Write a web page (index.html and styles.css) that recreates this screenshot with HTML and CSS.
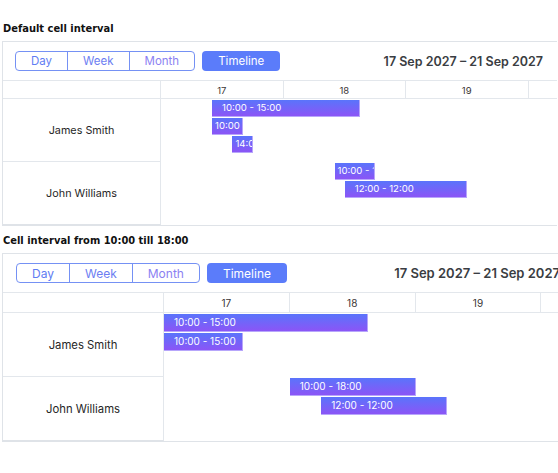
FILE: index.html
```html
<!DOCTYPE html>
<html lang="en">

<head>
  <meta charset="UTF-8" />
  <title>Timeline cell intervals</title>
  <meta name="viewport" content="width=device-width, initial-scale=1.0">
  <link rel="stylesheet" href="styles.css">
</head>

<body>
  <div class="page">

    <!-- Timeline with whole-day cells -->
    <section class="demo">
      <h2 class="demo-title">Default cell interval</h2>
      <div class="scheduler">
        <div class="toolbar">
          <div class="views">
            <button class="view">Day</button>
            <button class="view">Week</button>
            <button class="view">Month</button>
          </div>
          <button class="view view-active">Timeline</button>
          <div class="range">17 Sep 2027 – 21 Sep 2027</div>
        </div>
        <div class="timeline">
          <div class="grid">
            <div class="cell head"></div>
            <div class="cell head">17</div>
            <div class="cell head">18</div>
            <div class="cell head">19</div>
            <div class="cell head">20</div>
            <div class="cell head">21</div>

            <div class="cell resource r1">James Smith</div>
            <div class="cell r1"></div><div class="cell r1"></div><div class="cell r1"></div><div class="cell r1"></div><div class="cell r1"></div>
            <div class="lane r1">
              <div class="event" style="margin-left: 8.333%; width: 24.167%">10:00 - 15:00</div>
              <div class="event event-short" style="margin-left: 8.333%; width: 5%">10:00 - 16:00</div>
              <div class="event event-short" style="margin-left: 11.667%; width: 3.333%">14:00 - 18:00</div>
            </div>

            <div class="cell resource r2 last">John Williams</div>
            <div class="cell r2 last"></div><div class="cell r2 last"></div><div class="cell r2 last"></div><div class="cell r2 last"></div><div class="cell r2 last"></div>
            <div class="lane r2">
              <div class="event event-short" style="margin-left: 28.333%; width: 6.667%">10:00 - 18:00</div>
              <div class="event" style="margin-left: 30%; width: 20%">12:00 - 12:00</div>
            </div>
          </div>
        </div>
      </div>
    </section>

    <!-- Timeline where each cell covers 10:00 - 18:00 -->
    <section class="demo">
      <h2 class="demo-title">Cell interval from 10:00 till 18:00</h2>
      <div class="scheduler scheduler-wide">
        <div class="toolbar">
          <div class="views">
            <button class="view">Day</button>
            <button class="view">Week</button>
            <button class="view">Month</button>
          </div>
          <button class="view view-active">Timeline</button>
          <div class="range">17 Sep 2027 – 21 Sep 2027</div>
        </div>
        <div class="timeline">
          <div class="grid">
            <div class="cell head"></div>
            <div class="cell head">17</div>
            <div class="cell head">18</div>
            <div class="cell head">19</div>
            <div class="cell head">20</div>
            <div class="cell head">21</div>

            <div class="cell resource r1">James Smith</div>
            <div class="cell r1"></div><div class="cell r1"></div><div class="cell r1"></div><div class="cell r1"></div><div class="cell r1"></div>
            <div class="lane r1">
              <div class="event" style="margin-left: 0%; width: 32.5%">10:00 - 15:00</div>
              <div class="event" style="margin-left: 0%; width: 12.5%">10:00 - 15:00</div>
            </div>

            <div class="cell resource r2 last">John Williams</div>
            <div class="cell r2 last"></div><div class="cell r2 last"></div><div class="cell r2 last"></div><div class="cell r2 last"></div><div class="cell r2 last"></div>
            <div class="lane r2">
              <div class="event" style="margin-left: 20%; width: 20%">10:00 - 18:00</div>
              <div class="event" style="margin-left: 25%; width: 20%">12:00 - 12:00</div>
            </div>
          </div>
        </div>
      </div>
    </section>

  </div>
</body>

</html>
```

FILE: styles.css
```css
* {
  margin: 0;
  padding: 0;
  box-sizing: border-box;
}

body {
  background: #fff;
  font-family: 'Inter', 'Noto Sans', sans-serif;
  color: #333;
}

.page {
  width: 558px;
  padding: 22px 0 0 2px;
  overflow: hidden;
}

/* === Demo blocks === */
.demo+.demo {
  margin-top: 8px;
}

.demo-title {
  font-family: 'DejaVu Sans Condensed', 'DejaVu Sans', sans-serif;
  font-stretch: condensed;
  font-size: 11px;
  line-height: 14px;
  font-weight: bold;
  color: #111;
  margin: 0 0 5px 1px;
}

/* === Scheduler === */
.scheduler {
  --label-w: 158px;
  --day-w: 122.5px;
  --head-h: 18px;
  --row-h: 63px;
  --bar-h: 17px;
  --fs: 11.5px;
  --ev-fs: 9.6px;
  width: 555px;
  border: 1px solid #dfe3e8;
  border-right: none;
  background: #fff;
}

.scheduler-wide {
  --label-w: 161px;
  --day-w: 125.8px;
  --head-h: 20px;
  --row-h: 64px;
  --bar-h: 18px;
  --fs: 12px;
  --ev-fs: 10px;
  width: 572px;
}

.toolbar {
  display: flex;
  align-items: center;
  gap: 7px;
  height: 39px;
  padding: 0 14px 0 12px;
  border-bottom: 1px solid #e3e7ec;
}

.scheduler-wide .toolbar {
  padding-left: 13px;
}

.views {
  display: flex;
  height: 20px;
  border: 1px solid #7591f4;
  border-radius: 4px;
  overflow: hidden;
}

.view {
  height: 20px;
  padding: 0 15px;
  border: none;
  background: transparent;
  font-family: inherit;
  font-size: var(--fs);
  color: #5f7df3;
  cursor: pointer;
}

.views .view {
  height: 18px;
}

.views .view+.view {
  border-left: 1px solid #7591f4;
}

.views .view:nth-child(2) {
  color: #6c7ef2;
}

.views .view:nth-child(3) {
  color: #8c7ff2;
}

.view-active {
  padding: 0 16px;
  background: #5b7cfa;
  color: #fff;
  border-radius: 4px;
}

.range {
  margin-left: auto;
  font-size: calc(var(--fs) + 1px);
  font-weight: 600;
  color: #3a3d42;
}

/* === Timeline grid === */
.timeline {
  overflow: hidden;
}

.grid {
  display: grid;
  grid-template-columns: var(--label-w) repeat(5, var(--day-w));
  grid-template-rows: var(--head-h) var(--row-h) var(--row-h);
  width: max-content;
}

.cell {
  border-right: 1px solid #e3e7ec;
  border-bottom: 1px solid #e3e7ec;
  display: flex;
  align-items: center;
  justify-content: center;
}

.cell.last {
  border-bottom-color: #dfe3e8;
}

.head {
  font-size: calc(var(--fs) - 2px);
  color: #3b3535;
  padding-top: 1px;
}

.resource {
  font-size: calc(var(--fs) - 0.7px);
  color: #262626;
}

.r1 {
  grid-row: 2;
}

.r2 {
  grid-row: 3;
}

/* events sit over the day cells of their resource row */
.lane {
  grid-column: 2 / -1;
  display: flex;
  flex-direction: column;
  gap: 1px;
  padding-top: 1px;
  min-width: 0;
}

.event {
  height: var(--bar-h);
  line-height: calc(var(--bar-h) - 1px);
  padding: 0 10px;
  background: linear-gradient(180deg, #5a74fb, #8b55f6);
  border-right: 1px solid #b7a6fb;
  border-bottom: 1px solid #b7a6fb;
  color: #fff;
  font-size: var(--ev-fs);
  white-space: nowrap;
  overflow: hidden;
}

.event-short {
  padding: 0 3px;
}
```
